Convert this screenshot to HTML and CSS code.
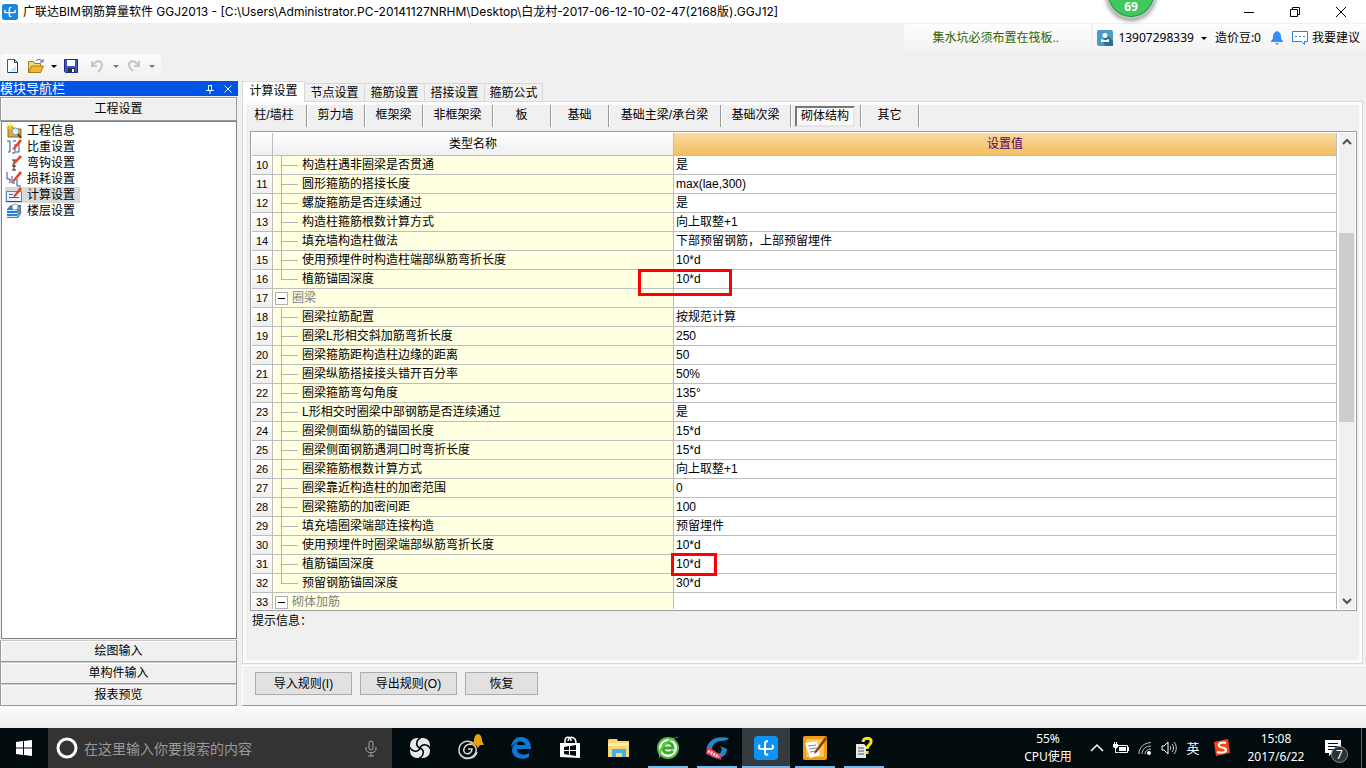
FILE: index.html
```html
<!DOCTYPE html>
<html lang="zh-CN">
<head>
<meta charset="utf-8">
<title>广联达BIM钢筋算量软件 GGJ2013</title>
<link rel="stylesheet" href="styles.css">
</head>
<body>
<header class="titlebar">
  <svg class="app-logo" width="16" height="16" viewBox="0 0 24 24"><rect width="24" height="24" rx="4" fill="#1787e0"/><path d="M14 5c-2 0-3 1-3 3v9c0 2 2 2 3 1M5 9c-2 2-1 4 1 4h12c2 0 3-2 1-4" fill="none" stroke="#fff" stroke-width="2"/></svg>
  <h1 class="title">广联达BIM钢筋算量软件 GGJ2013 - [C:\Users\Administrator.PC-20141127NRHM\Desktop\白龙村-2017-06-12-10-02-47(2168版).GGJ12]</h1>
  <div class="window-buttons">
    <button aria-label="最小化"><svg width="12" height="12" viewBox="0 0 12 12"><path d="M1 6.500h10" stroke="#000"/></svg></button>
    <button aria-label="还原"><svg width="12" height="12" viewBox="0 0 12 12"><path d="M1.500 3.500h7v7h-7zM3.500 3.500v-2h7v7h-2" fill="none" stroke="#000"/></svg></button>
    <button aria-label="关闭"><svg width="12" height="12" viewBox="0 0 12 12"><path d="M1 1l10 10M11 1L1 11" stroke="#000"/></svg></button>
  </div>
  <div class="speed-ball"><span>69</span></div>
</header>

<section class="topbar">
  <div class="account-row">
    <a class="notice" href="#">集水坑必须布置在筏板..</a>
    <div class="account">
      <svg width="16" height="16" viewBox="0 0 16 16"><rect width="16" height="16" rx="2" fill="#4a9cc9"/><path d="M6 11l3-7 7 7v5H8z" fill="#2c6f96"/><circle cx="8" cy="5.500" r="2.500" fill="#fff"/><path d="M4 9l3 1h2l3-1v3H4z" fill="#fff"/></svg>
      <span class="phone">13907298339</span>
      <i class="caret"></i>
      <span class="beans">造价豆:0</span>
      <svg class="bell" width="12" height="16" viewBox="0 0 12 16"><path d="M6 1c3 1 4 3 4 6 0 2 1 3 2 4v1H0v-1c1-1 2-2 2-4 0-3 1-5 4-6zM4 13h4l-2 2z" fill="#2f8fff"/></svg>
      <svg width="16" height="16" viewBox="0 0 16 16"><path d="M.5 1.500h15v10h-3v3l-3-3h-9z" fill="#fff" stroke="#2f7de0"/><path d="M3 6.500h2M7 6.500h2M11 6.500h2" stroke="#2f7de0"/></svg>
      <a class="suggest" href="#">我要建议</a>
    </div>
  </div>
  <div class="toolbar">
    <button aria-label="新建"><svg width="16" height="16" viewBox="0 0 16 16"><path d="M2.500 1.500h7l3 3v10h-10z" fill="#fff" stroke="#445a78"/><path d="M9.500 1.500v3h3M12.500 5v9.500H3" fill="none" stroke="#1f3857"/><path d="M4 13.500l7-6v6z" fill="#d3e3f3"/></svg></button>
    <button aria-label="打开"><svg width="16" height="16" viewBox="0 0 16 16"><path d="M.5 3.500h5l1 2h6v9H.5z" fill="#f5d77c" stroke="#a37b20"/><path d="M3.500 8h12l-3 6.500H.5z" fill="#f2b632" stroke="#a37b20"/><path d="M8 3c2-2 4-2 6 0M15 1v3h-3" fill="none" stroke="#3c5e91"/></svg></button>
    <i class="caret"></i>
    <button class="save" aria-label="保存"><svg width="14" height="14" viewBox="0 0 14 14"><path d="M.5.5h13v13h-12l-1-1z" fill="#3f55c8" stroke="#202d85"/><path d="M3 1h8v6H3z" fill="#fff"/><path d="M4 9h7v4H4z" fill="#262d4c"/><path d="M8 10h2v3H8z" fill="#fff"/></svg></button>
    <i class="divider"></i>
    <button aria-label="撤销"><svg width="16" height="16" viewBox="0 0 16 16"><path d="M2 3v5h5M2.500 7.500C6 2 12 2 12 7c0 3-2 5-4 7" fill="none" stroke="#c5c5c5" stroke-width="2"/></svg></button>
    <i class="caret dim"></i>
    <button aria-label="重做"><svg width="16" height="16" viewBox="0 0 16 16"><path d="M13 3v5H8M12.500 7.500C9 2 3 2 3 7c0 3 2 4 4 6" fill="none" stroke="#c5c5c5" stroke-width="2"/></svg></button>
    <i class="caret dim"></i>
  </div>
</section>

<main class="workspace">
  <aside class="sidebar">
    <div class="side-title"><span>模块导航栏</span>
      <button aria-label="固定"><svg width="10" height="10" viewBox="0 0 10 10"><path d="M3 1.500h4M3.500 1v5M6.500 1v5M1 6.500h8M5 6v4" fill="none" stroke="#fff"/><path d="M6 1h1v5H6z" fill="#fff"/></svg></button>
      <button aria-label="关闭导航"><svg width="10" height="10" viewBox="0 0 10 10"><path d="M1.500 1.500l7 7M8.500 1.500l-7 7" stroke="#fff"/></svg></button>
    </div>
    <button class="module">工程设置</button>
    <nav class="tree">
      <a href="#"><svg width="16" height="16" viewBox="0 0 16 16"><path d="M2 4h5l1 2h7v8H2z" fill="#e0ae35" stroke="#8f6413"/><path d="M4 0v8M0 4h8M1 1l6 6M7 1L1 7" stroke="#f2d018"/><circle cx="9.500" cy="8.500" r="3.500" fill="#dceeff" stroke="#7d93ad"/><path d="M12 11l3 4" stroke="#5a3c12" stroke-width="2"/></svg>工程信息</a>
      <a href="#"><svg width="16" height="16" viewBox="0 0 16 16"><path d="M1 2h3v11H2M7 2h3M9 5v9H6M13 3v10h-3" fill="none" stroke="#2c4f8f"/><path d="M7 9l7-9 2 2-7 8-3 1z" fill="#e8432a"/></svg>比重设置</a>
      <a href="#"><svg width="16" height="16" viewBox="0 0 16 16"><path d="M6 5h4M8 5v10M6 15h4M6 11h4" fill="none" stroke="#222"/><path d="M7 8l7-8 2 2-7 7-3 2z" fill="#e8432a"/></svg>弯钩设置</a>
      <a href="#"><svg width="16" height="16" viewBox="0 0 16 16"><path d="M1 1v7h3M6 5v7h3M11 8v7h4M4 8v4" fill="none" stroke="#2c4f8f"/><path d="M7 9l7-9 2 2-7 8-3 2z" fill="#e8432a"/></svg>损耗设置</a>
      <a href="#" class="current"><svg width="16" height="16" viewBox="0 0 16 16"><path d="M.5 4.500h15v10H.5z" fill="#e8f1fd" stroke="#5b84c9"/><path d="M3 7.500h4M3 10.500h10" stroke="#3c67b5"/><path d="M.5 14.500h15" stroke="#234a91"/><path d="M8 8l6-8 2 2-6 7-3 2z" fill="#e8432a"/></svg>计算设置</a>
      <a href="#"><svg width="16" height="16" viewBox="0 0 16 16"><path d="M1 6l4-4h10v9l-3 4H1z" fill="#2f80cf"/><path d="M1 7.500h10l3-3M1 10.500h10l3-3M1 13.500h10l3-3" fill="none" stroke="#d3ebff"/><circle cx="9" cy="4" r="3" fill="#f2f5f8" stroke="#9aa6b3"/><path d="M11 6l4 4" stroke="#a6762c" stroke-width="2"/></svg>楼层设置</a>
    </nav>
    <button class="module low">绘图输入</button>
    <button class="module low">单构件输入</button>
    <button class="module low">报表预览</button>
  </aside>

  <section class="content">
    <div class="tabs" role="tablist">
      <button role="tab" aria-selected="true" class="tab active">计算设置</button>
      <button role="tab" class="tab">节点设置</button>
      <button role="tab" class="tab">箍筋设置</button>
      <button role="tab" class="tab">搭接设置</button>
      <button role="tab" class="tab last">箍筋公式</button>
    </div>
    <div class="pane">
      <div class="subtabs">
        <button class="first">柱/墙柱</button><button class="w58">剪力墙</button><button class="w58">框架梁</button><button class="w70">非框架梁</button><button class="w58">板</button><button class="w58">基础</button><button class="w112">基础主梁/承台梁</button><button class="w70">基础次梁</button><button class="w70 pressed"><span>砌体结构</span></button><button class="w58">其它</button>
      </div>
      <div class="grid">
        <div class="grid-view">
        <table>
          <colgroup><col class="c-num"><col class="c-name"><col></colgroup>
          <thead><tr><th></th><th>类型名称</th><th class="hot">设置值</th></tr></thead>
          <tbody>
            <tr><th>10</th><td class="leaf">构造柱遇非圈梁是否贯通</td><td>是</td></tr>
            <tr><th>11</th><td class="leaf">圆形箍筋的搭接长度</td><td>max(lae,300)</td></tr>
            <tr><th>12</th><td class="leaf">螺旋箍筋是否连续通过</td><td>是</td></tr>
            <tr><th>13</th><td class="leaf">构造柱箍筋根数计算方式</td><td>向上取整+1</td></tr>
            <tr><th>14</th><td class="leaf">填充墙构造柱做法</td><td>下部预留钢筋，上部预留埋件</td></tr>
            <tr><th>15</th><td class="leaf">使用预埋件时构造柱端部纵筋弯折长度</td><td>10*d</td></tr>
            <tr><th>16</th><td class="leaf end">植筋锚固深度</td><td>10*d</td></tr>
            <tr><th>17</th><td class="group"><button class="fold" aria-label="折叠圈梁"></button>圈梁</td><td></td></tr>
            <tr><th>18</th><td class="leaf">圈梁拉筋配置</td><td>按规范计算</td></tr>
            <tr><th>19</th><td class="leaf">圈梁L形相交斜加筋弯折长度</td><td>250</td></tr>
            <tr><th>20</th><td class="leaf">圈梁箍筋距构造柱边缘的距离</td><td>50</td></tr>
            <tr><th>21</th><td class="leaf">圈梁纵筋搭接接头错开百分率</td><td>50%</td></tr>
            <tr><th>22</th><td class="leaf">圈梁箍筋弯勾角度</td><td>135°</td></tr>
            <tr><th>23</th><td class="leaf">L形相交时圈梁中部钢筋是否连续通过</td><td>是</td></tr>
            <tr><th>24</th><td class="leaf">圈梁侧面纵筋的锚固长度</td><td>15*d</td></tr>
            <tr><th>25</th><td class="leaf">圈梁侧面钢筋遇洞口时弯折长度</td><td>15*d</td></tr>
            <tr><th>26</th><td class="leaf">圈梁箍筋根数计算方式</td><td>向上取整+1</td></tr>
            <tr><th>27</th><td class="leaf">圈梁靠近构造柱的加密范围</td><td>0</td></tr>
            <tr><th>28</th><td class="leaf">圈梁箍筋的加密间距</td><td>100</td></tr>
            <tr><th>29</th><td class="leaf">填充墙圈梁端部连接构造</td><td>预留埋件</td></tr>
            <tr><th>30</th><td class="leaf">使用预埋件时圈梁端部纵筋弯折长度</td><td>10*d</td></tr>
            <tr><th>31</th><td class="leaf">植筋锚固深度</td><td>10*d</td></tr>
            <tr><th>32</th><td class="leaf end">预留钢筋锚固深度</td><td>30*d</td></tr>
            <tr><th>33</th><td class="group"><button class="fold" aria-label="折叠砌体加筋"></button>砌体加筋</td><td></td></tr>
          </tbody>
        </table>
        </div>
        <div class="scrollbar">
          <svg width="16" height="20" viewBox="0 0 16 20"><path d="M4 11l4-4 4 4" fill="none" stroke="#505050" stroke-width="2"/></svg>
          <div class="track"><div class="thumb"></div></div>
          <svg width="16" height="20" viewBox="0 0 16 20"><path d="M4 10l4 4 4-4" fill="none" stroke="#505050" stroke-width="2"/></svg>
        </div>
        <div class="mark mark-a"></div>
        <div class="mark mark-b"></div>
      </div>
      <p class="hint">提示信息：</p>
    </div>
    <div class="actions">
      <button class="wide">导入规则(I)</button><button class="wide">导出规则(O)</button><button>恢复</button>
    </div>
  </section>
</main>

<div class="statusbar"></div>

<footer class="taskbar">
  <button class="start" aria-label="开始"><svg width="16" height="16" viewBox="0 0 16 16"><path d="M0 2l7-1v6.500H0zM8 1l8-1v7.500H8zM0 8.500h7V15l-7-1zM8 8.500h8V16l-8-1z" fill="#fff"/></svg></button>
  <div class="search">
    <svg width="22" height="22" viewBox="0 0 22 22"><circle cx="11" cy="11" r="9" fill="none" stroke="#fff" stroke-width="3"/></svg>
    <input type="text" placeholder="在这里输入你要搜索的内容" aria-label="搜索">
    <svg width="14" height="18" viewBox="0 0 14 18"><path d="M5 4a2 2 0 0 1 4 0v5a2 2 0 0 1-4 0zM2 8v2c0 5 10 5 10 0V8M7 14v3M4 17h6" fill="none" stroke="#a8a8a8"/></svg>
  </div>
  <div class="apps">
    <button class="roomy" aria-label="风车"><svg width="22" height="22" viewBox="0 0 22 22"><rect x="1" y="1" width="20" height="20" rx="7" fill="#e9e9e9"/><path d="M11 11C6 9 7 3 12 0M11 11c2-5 8-4 11 1M11 11c5 2 4 8-1 11M11 11c-2 5-8 4-11-1" fill="none" stroke="#020c0e" stroke-width="1.500"/><path d="M10 0l1 3 1-3zM22 10l-3 1 3 1zM12 22l-1-3-1 3zM0 12l3-1-3-1z" fill="#020c0e"/></svg></button>
    <button class="roomy" aria-label="提醒"><svg width="28" height="28" viewBox="0 0 28 28"><path d="M16 9C9 5 2 9 2 16c0 8 9 10 14 6 5-4 4-11-2-12-6 0-9 6-6 9 3 2 7 0 7-4h-4M4 21c4 6 14 4 16-3" fill="none" stroke="#d7d7d7" stroke-width="1.500"/><path d="M21 0c4 1 4 5 4 7l2 4H15l2-4c0-2 0-6 4-7zM19 11h4l-2 3z" fill="#e5a50c"/></svg></button>
    <button aria-label="Edge"><svg width="20" height="22" viewBox="0 0 20 22"><path d="M0 10C1 3 5 0 10 0c7 0 10 5 10 12H6c0 6 7 7 12 4v4c-7 4-17 1-17-7 0-4 3-7 6-8-1 1-1 2-1 3h8c0-5-9-5-14 2z" fill="#0b78d8"/></svg></button>
    <button aria-label="商店"><svg width="22" height="24" viewBox="0 0 22 24"><path d="M6 8V5c0-5 6-5 6 0M9 5c1-6 8-4 8 2" fill="none" stroke="#fff" stroke-width="1.500"/><path d="M1 7h20v15l-20-1z" fill="#fff"/><path d="M5 11l5-1v4H5zM11 10l6-1v5h-6zM5 15h5v4l-5-1zM11 15h6v5l-6-1z" fill="#020c0e"/></svg></button>
    <button aria-label="资源管理器"><svg width="22" height="20" viewBox="0 0 22 20"><path d="M0 2l1-1h8l1 2h11v16H0z" fill="#f9d670"/><path d="M0 5h21v3H0z" fill="#ffe9a5"/><path d="M4 11h14v8h-4v-4H8v4H4z" fill="#3fb3e8"/></svg></button>
    <button class="run" aria-label="浏览器"><svg width="24" height="24" viewBox="0 0 24 24"><circle cx="12" cy="12" r="10" fill="#f4fbf2" stroke="#55bb45" stroke-width="2"/><path d="M7 12h10c0-7-10-7-10 0 0 6 7 6 10 3" fill="none" stroke="#38ac32" stroke-width="3"/><path d="M4 23C-1 14 11 1 23 1 12 4 4 12 4 23z" fill="#5cc843"/></svg></button>
    <button class="run" aria-label="浏览助手"><svg width="24" height="24" viewBox="0 0 24 24"><path d="M24 2C12-1 2 4 2 13c1 12 19 13 20 0l-7-3c3 3 2 8-3 8-6 0-7-9 0-12 5-2 9 0 12-4z" fill="#2287c8"/><path d="M2 10l14 9v5L1 18z" fill="#e5384c"/><path d="M3 15l11 6" stroke="#ffd5da" stroke-width="3" stroke-dasharray="2 1"/></svg></button>
    <button class="run active" aria-label="GGJ2013"><svg width="24" height="24" viewBox="0 0 24 24"><rect width="24" height="24" rx="4" fill="#0c93f5"/><path d="M14 5c-2 0-3 1-3 3v9c0 2 2 2 3 1M6 9c-2 2-1 4 1 4h10c2 0 3-2 1-4" fill="none" stroke="#fff" stroke-width="2"/></svg></button>
    <button class="run" aria-label="记事"><svg width="24" height="24" viewBox="0 0 24 24"><rect width="24" height="24" rx="2" fill="#f39a18"/><path d="M3 3h18v18H3z" fill="#ffc752"/><path d="M2 7l12-2 3 14-10 3z" fill="#fff"/><path d="M5 10l8-1M6 13l8-1M7 16l6-1" stroke="#888"/><path d="M22 1L12 15l-1 3 3-2L24 3z" fill="#8a3b12"/></svg></button>
    <button class="run" aria-label="帮助"><svg width="18" height="22" viewBox="0 0 18 22"><path d="M1 7h8l2 2v12H1z" fill="#e8e8e8"/><path d="M3 11h6M3 14h6M3 17h6" stroke="#555"/><path d="M8 5c0-5 9-5 8 0 0 3-4 3-4 7M12 14v3" fill="none" stroke="#f5ea00" stroke-width="3"/></svg></button>
  </div>
  <div class="tray">
    <div class="cpu">55%<br>CPU使用</div>
    <button aria-label="显示隐藏图标"><svg width="14" height="10" viewBox="0 0 14 10"><path d="M1 8l6-6 6 6" fill="none" stroke="#fff" stroke-width="1.500"/></svg></button>
    <button aria-label="电源"><svg width="16" height="14" viewBox="0 0 16 14"><path d="M4.500 4.500h10v7h-9M15.500 6v4" fill="none" stroke="#fff"/><path d="M6 6h7v4H6zM0 3h5v3L3 8 0 6z" fill="#fff"/><path d="M1.500 1v2M3.500 1v2M2.500 7v4.500H5" fill="none" stroke="#fff"/></svg></button>
    <button aria-label="网络"><svg width="14" height="14" viewBox="0 0 14 14"><path d="M1 13C1 6 6 2 13 1.500M4 13c0-5 4-8 9-8M7 13c0-3 3-5 6-5" fill="none" stroke="#c8c8c8"/><circle cx="11" cy="12" r="2" fill="#fff"/></svg></button>
    <button aria-label="音量"><svg width="16" height="14" viewBox="0 0 16 14"><path d="M1 5h2l4-4v12L3 9H1z" fill="none" stroke="#fff"/><path d="M9 5c1 1 1 3 0 4M11 3c2 2 2 6 0 8M13 1c3 3 3 9 0 12" fill="none" stroke="#d0d0d0"/></svg></button>
    <button class="ime">英</button>
    <button class="sogou" aria-label="搜狗输入法"><svg width="18" height="18" viewBox="0 0 18 18"><path d="M1 3l14-3 2 14-14 3z" fill="#f04a1c"/><path d="M13 4c-4-1-8 0-7 3 0 2 7 1 7 4s-5 3-9 2" fill="none" stroke="#fff" stroke-width="2"/></svg></button>
    <div class="clock">15:08<br>2017/6/22</div>
    <button class="notify" aria-label="通知"><svg width="18" height="16" viewBox="0 0 18 16"><path d="M1 0h16v13H8l-3 3v-3H1z" fill="#fff"/><path d="M4 3.500h10M4 6.500h10M4 9.500h6" stroke="#020c0e"/></svg><span class="count">7</span></button>
    <i class="peek"></i>
  </div>
</footer>
</body>
</html>
```
FILE: styles.css
```css
* { box-sizing: border-box; }
body {
  margin: 0;
  height: 100vh;
  display: flex;
  flex-direction: column;
  overflow: hidden;
  background: #f0f0f0;
  color: #000;
  font: 12px/16px "Liberation Sans", "Noto Sans CJK SC", sans-serif;
}
button {
  font: inherit;
  color: inherit;
  background: none;
  border: 0;
  padding: 0;
  white-space: nowrap;
}
a { color: inherit; text-decoration: none; }
svg { display: block; flex: none; }

/* Title bar */
.titlebar {
  position: relative;
  display: flex;
  align-items: center;
  height: 23px;
  padding: 0 2px;
  background: #fff;
}
.title {
  flex: 1;
  margin: 0 0 0 5px;
  font: 12px/22px Inter, "Noto Sans CJK SC", sans-serif;
  white-space: nowrap;
}
.window-buttons { display: flex; }
.window-buttons button {
  display: flex;
  align-items: center;
  justify-content: center;
  width: 46px;
  height: 20px;
}
.speed-ball {
  position: absolute;
  z-index: 2;
  top: -31px;
  right: 210px;
  width: 50px;
  height: 50px;
  display: flex;
  align-items: flex-end;
  justify-content: center;
  padding-bottom: 3px;
  border: 2px solid #b9c4bc;
  border-radius: 50%;
  background: #3fc95d;
  box-shadow: inset 0 0 0 1px #23884a, 0 2px 4px #999;
  color: #fff;
  font: bold 12px/14px "Noto Sans", sans-serif;
}

/* Tool area */
.topbar {
  display: flex;
  flex-direction: column;
  justify-content: space-between;
  height: 58px;
  padding: 1px 0 3px 1px;
}
.account-row { display: flex; justify-content: flex-end; gap: 2px; }
.notice, .account {
  display: flex;
  align-items: center;
  height: 28px;
  background: linear-gradient(#fdfdfd, #f2f2f2);
}
.notice { width: 187px; padding-left: 28px; color: #2b6600; border-radius: 3px 0 0 0; }
.account {
  padding: 0 6px 0 4px;
  font-family: "Noto Sans", "Noto Sans CJK SC", sans-serif;
  white-space: nowrap;
}
.phone { margin: 0 7px 0 5px; }
.beans { margin-left: 8px; }
.bell { margin: 0 9px 0 10px; }
.suggest { margin-left: 4px; }
.caret {
  border: 3px solid transparent;
  border-top-color: #000;
  border-bottom: 0;
}
.caret.dim { border-top-color: #777; }
.toolbar {
  display: flex;
  align-items: center;
  align-self: flex-start;
  width: 160px;
  height: 24px;
  padding-left: 4px;
  background: linear-gradient(#fcfcfc, #f1f1f1);
  border-radius: 3px;
}
.toolbar button { width: 16px; margin-right: 7px; }
.toolbar .save { margin: 0 5px 0 7px; }
.divider { width: 1px; height: 22px; margin-right: 7px; background: #999; }
.toolbar .dim { margin-right: 7px; }

/* Workspace */
.workspace { flex: 1; display: flex; min-height: 0; gap: 4px; }
.sidebar {
  width: 238px;
  display: flex;
  flex-direction: column;
  flex: none;
  padding-right: 1px;
}
.side-title {
  display: flex;
  align-items: center;
  gap: 8px;
  height: 15px;
  margin-right: -1px;
  padding-right: 5px;
  background: #0054e3;
  color: #fff;
  font-size: 13px;
  line-height: 15px;
}
.side-title span { flex: 1; }
.module {
  height: 24px;
  margin-top: 1px;
  border: 1px solid #999;
  box-shadow: inset 1px 1px #fff;
}
.module.low { height: 22px; margin: 0; border-top-color: #c8c8c8; }
.tree {
  flex: 1;
  margin: 0 0 1px 1px;
  padding: 1px 3px;
  background: #fff;
  border: 1px solid #7f7f87;
}
.tree a {
  display: flex;
  align-items: center;
  gap: 5px;
  width: 75px;
  height: 16px;
  padding-left: 1px;
  white-space: nowrap;
}
.tree .current { background: #d9d9d9; }

.content { flex: 1; display: flex; flex-direction: column; min-width: 0; }
.tabs { display: flex; align-items: flex-end; height: 20px; }
.tab {
  width: 60px;
  height: 18px;
  border: 1px solid #d9d9d9;
  border-bottom: 0;
  border-left: 0;
}
.tab.last { width: 58px; }
.tab.active {
  position: relative;
  z-index: 1;
  width: 63px;
  height: 21px;
  margin: 0 0 -1px;
  padding-bottom: 2px;
  border-left: 1px solid #d9d9d9;
  background: #fff;
}
.pane {
  flex: 1;
  display: flex;
  flex-direction: column;
  min-height: 0;
  margin-right: 3px;
  padding: 1px 5px 0;
  border: 1px solid #d9d9d9;
  box-shadow: inset 0 0 0 3px #fcfcfc;
}
.subtabs { display: flex; height: 26px; padding-top: 2px; }
.subtabs button {
  height: 22px;
  padding-bottom: 2px;
  border-right: 1px solid #999;
  box-shadow: 1px 0 #fff;
}
.subtabs .first { width: 59px; padding-right: 6px; }
.subtabs .w58 { width: 58px; }
.subtabs .w70 { width: 70px; }
.subtabs .w112 { width: 112px; }
.subtabs .pressed { padding: 0 5px 0 4px; }
.pressed span {
  display: block;
  line-height: 17px;
  border: 2px solid #e6e6e6;
  border-top-color: #777;
  border-left-color: #777;
  background: #f9f9f9;
}

/* Settings grid */
.grid {
  position: relative;
  flex: 1;
  display: flex;
  gap: 2px;
  min-height: 0;
  margin: 2px 0 0 2px;
  padding: 1px;
  border: 1px solid #9c9ca3;
  background: #fff;
}
.grid-view { flex: 1; overflow: hidden; }
table {
  width: 100%;
  table-layout: fixed;
  border-collapse: separate;
  border-spacing: 0;
}
.c-num { width: 21px; }
.c-name { width: 401px; }
th, td {
  height: 19px;
  padding: 0;
  border: solid #bdbdbd;
  border-width: 0 1px 1px 0;
  font-weight: normal;
  line-height: 18px;
  white-space: nowrap;
}
td { padding: 1px 0 0 2px; line-height: 17px; }
thead th { height: 23px; background: linear-gradient(#fff, #efefef); }
thead .hot { background: linear-gradient(#fad9a0, #f1bf62); color: #5a005a; }
tbody th { background: linear-gradient(#fff, #efefef); font-size: 11px; }
.leaf, .group { background-color: #ffffe1; }
.leaf {
  padding-left: 29px;
  background-image: linear-gradient(#b5b5b5, #b5b5b5), linear-gradient(#b5b5b5, #b5b5b5);
  background-repeat: no-repeat;
  background-position: 8px 0, 8px 9px;
  background-size: 1px 19px, 17px 1px;
}
.leaf.end { background-size: 1px 9px, 17px 1px; }
.group { color: #808080; }
.fold {
  width: 13px;
  height: 13px;
  margin-right: 4px;
  vertical-align: middle;
  border: 1px solid #b0b0b0;
  background: linear-gradient(#000, #000) center / 7px 1px no-repeat #fff;
}
.scrollbar {
  display: flex;
  flex-direction: column;
  width: 16px;
  background: #f0f0f0;
}
.track { flex: 1; padding-top: 80px; }
.thumb { height: 53%; margin-right: 1px; background: #cdcdcd; }
.mark { position: absolute; border: 3px solid #f00; }
.mark-a { left: 387px; top: 137px; width: 94px; height: 27px; }
.mark-b { left: 420px; top: 421px; width: 46px; height: 23px; }
.hint { height: 52px; margin: 0; padding: 2px 4px; }

.actions {
  display: flex;
  gap: 8px;
  height: 41px;
  margin-top: 1px;
  padding: 7px 13px;
  border: solid #999;
  border-width: 0 0 1px 0;
  box-shadow: inset 1px 1px #fff;
}
.actions button {
  width: 73px;
  height: 23px;
  background: #e1e1e1;
  border: 1px solid #adadad;
}
.actions .wide { width: 97px; }
.statusbar { height: 22px; background: linear-gradient(#fcfcfc, #eee); }

/* Taskbar */
.taskbar {
  display: flex;
  height: 40px;
  background: #020c0e;
  color: #fff;
  font: 12px/18px "Noto Sans", "Noto Sans CJK SC", sans-serif;
}
.start { width: 48px; display: flex; align-items: center; justify-content: center; }
.search {
  display: flex;
  align-items: center;
  width: 344px;
  padding: 0 14px 0 8px;
  background: #333;
}
.search input {
  flex: 1;
  min-width: 0;
  padding: 0 0 0 6px;
  border: 0;
  background: none;
  color: #fff;
  font: 14px/20px "Noto Sans CJK SC", sans-serif;
}
.search input::placeholder { color: #999; opacity: 1; }
.apps { display: flex; gap: 1px; margin-left: 3px; }
.apps button {
  display: flex;
  align-items: center;
  justify-content: center;
  width: 48px;
  padding: 0;
}
.apps .roomy { width: 50px; }
.apps .run { background: linear-gradient(#76b9ed, #76b9ed) center bottom / 40px 2px no-repeat; }
.apps .run.active { background-color: #343c40; background-size: 48px 2px; }
.tray { display: flex; align-items: center; margin-left: auto; }
.tray button {
  display: flex;
  align-items: center;
  justify-content: center;
  width: 24px;
  height: 40px;
}
.cpu, .clock { text-align: center; }
.cpu { width: 60px; margin-right: 7px; }
.tray .sogou { margin-left: 5px; }
.ime { font-size: 13px; }
.clock { width: 72px; margin: 0 8px 0 6px; }
.tray .notify { position: relative; width: 28px; justify-content: flex-start; padding-left: 4px; }
.count {
  position: absolute;
  left: 11px;
  top: 18px;
  width: 17px;
  height: 17px;
  border: 1px solid #888;
  border-radius: 50%;
  background: #2b3336;
  line-height: 15px;
}
.peek { width: 5px; height: 40px; margin-left: 13px; border-left: 1px solid #5c6365; }
```
